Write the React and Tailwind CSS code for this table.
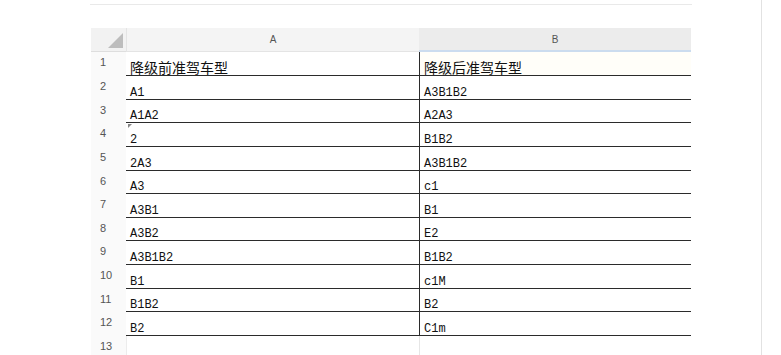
const rows = [
  ["降级前准驾车型", "降级后准驾车型"],
  ["A1", "A3B1B2"],
  ["A1A2", "A2A3"],
  ["2", "B1B2"],
  ["2A3", "A3B1B2"],
  ["A3", "c1"],
  ["A3B1", "B1"],
  ["A3B2", "E2"],
  ["A3B1B2", "B1B2"],
  ["B1", "c1M"],
  ["B1B2", "B2"],
  ["B2", "C1m"],
];

const cjk = "font-['Noto_Sans_CJK_SC',sans-serif] text-[14px] leading-[14px]";
const latin = "font-['Liberation_Mono','Noto_Sans_CJK_SC',monospace] text-[12px] leading-[10px]";

export default function App() {
  return (
    <div className="flex w-[781px] h-[355px] bg-white overflow-hidden">
      <div className="w-[762px] h-full border-r border-[#e2e2e2] pl-[90px] pt-[4px]">
        <div className="w-[602px] h-px bg-[#e9e9e9]" />

        {/* 表头 */}
        <div className="mt-[23px] ml-px flex h-[24px] font-['Liberation_Sans',sans-serif] text-[10px] text-[#555]">
          <div className="w-[35px] bg-[#f2f2f2] border-b border-[#dedede] flex items-end justify-end pr-[3px] pb-[3px]">
            <svg width="15" height="15" viewBox="0 0 15 15">
              <polygon points="15,0 15,15 0,15" fill="#bdbdbd" />
            </svg>
          </div>
          <div className="w-[293px] bg-[#f4f4f4] border-l border-[#e4e4e4] border-b border-[#dedede] flex items-center justify-center">
            A
          </div>
          <div className="w-[272px] bg-[#ececec] border-b-2 border-[#cbdcef] flex items-center justify-center">
            B
          </div>
        </div>

        {/* 数据行 */}
        {rows.map((r, i) => (
          <div key={i} className={`ml-px flex ${i === 0 ? "h-[24px]" : "h-[23.64px]"}`}>
            <div className="w-[35px] bg-[#fafafa] flex items-center pl-[9px] pb-[3px] font-['Liberation_Sans',sans-serif] text-[11px] text-[#555]">
              {i + 1}
            </div>
            <div
              className={`relative w-[293px] border-b border-[#2b2b2b] flex items-end pl-[4px] pb-px text-[#111] ${
                i === 0 ? cjk : latin
              }`}
            >
              {i === 3 && (
                <svg className="absolute left-[2px] top-[1px]" width="4" height="4" viewBox="0 0 4 4">
                  <polygon points="0,0 4,0 0,4" fill="#888" />
                </svg>
              )}
              {r[0]}
            </div>
            <div
              className={`w-[272px] border-l border-b border-[#2b2b2b] flex items-end pl-[4px] pb-px text-[#111] ${
                i === 0 ? cjk + " bg-[#fffef9]" : latin
              }`}
            >
              {r[1]}
            </div>
          </div>
        ))}

        <div className="ml-px flex h-[24px]">
          <div className="w-[35px] bg-[#fafafa] flex items-center pl-[9px] pb-[3px] font-['Liberation_Sans',sans-serif] text-[11px] text-[#555]">
            13
          </div>
          <div className="w-[293px] border-l border-[#ececec]" />
          <div className="w-[272px] border-l border-[#e6e6e6]" />
        </div>
      </div>
    </div>
  );
}
